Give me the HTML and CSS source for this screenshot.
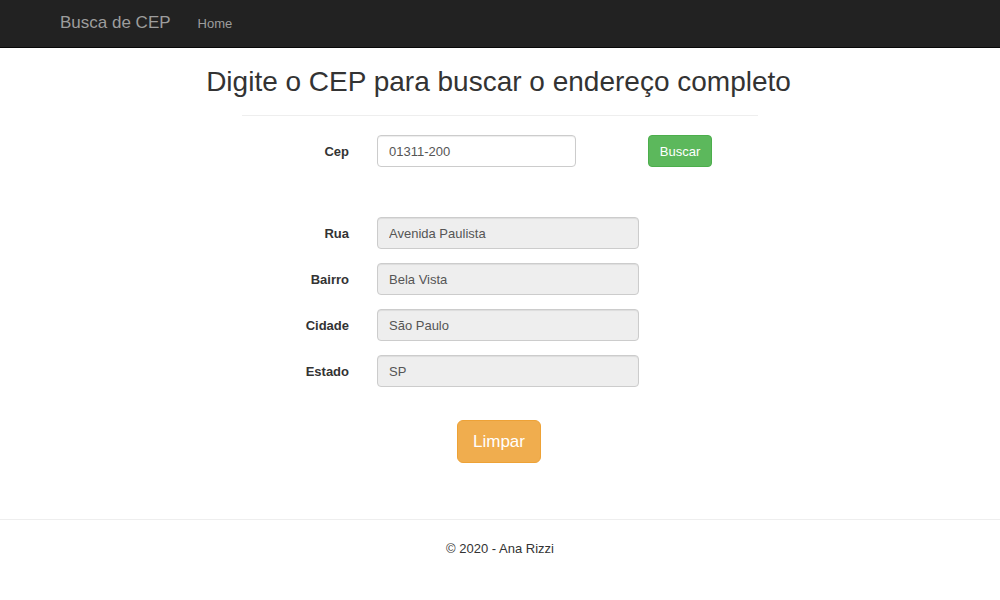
FILE: index.html
```html
<!DOCTYPE html>
<html lang="pt-BR">
<head>
<meta charset="utf-8">
<title>Busca de CEP</title>
<link rel="stylesheet" href="styles.css">
</head>
<body>
<nav class="navbar">
  <a class="brand" href="#">Busca de CEP</a>
  <a class="nav-link" href="#">Home</a>
</nav>
<main class="content">
  <h2 class="title">Digite o CEP para buscar o endereço completo</h2>
  <hr class="divider">
  <form class="form">
    <div class="row row-cep">
      <label class="label" for="cep">Cep</label>
      <input class="input input-cep" id="cep" type="text" value="01311-200">
      <button class="btn btn-success" type="button">Buscar</button>
    </div>
    <div class="address">
      <div class="row">
        <label class="label">Rua</label>
        <input class="input input-addr" type="text" value="Avenida Paulista" disabled>
      </div>
      <div class="row">
        <label class="label">Bairro</label>
        <input class="input input-addr" type="text" value="Bela Vista" disabled>
      </div>
      <div class="row">
        <label class="label">Cidade</label>
        <input class="input input-addr" type="text" value="São Paulo" disabled>
      </div>
      <div class="row">
        <label class="label">Estado</label>
        <input class="input input-addr" type="text" value="SP" disabled>
      </div>
    </div>
    <div class="actions">
      <button class="btn btn-warning btn-lg" type="button">Limpar</button>
    </div>
  </form>
</main>
<footer class="footer">
  <p class="copy">© 2020 - Ana Rizzi</p>
</footer>
</body>
</html>
```
FILE: styles.css
```css
* { box-sizing: border-box; }
html, body { margin: 0; padding: 0; }
body {
  font-family: "Liberation Sans", Arial, sans-serif;
  font-size: 13px;
  color: #333;
  background: #fff;
}
.navbar {
  height: 48px;
  background: #222;
  border-bottom: 1px solid #080808;
  display: flex;
  align-items: center;
  padding-left: 60px;
}
.brand {
  color: #9d9d9d;
  font-size: 17px;
  text-decoration: none;
  margin-right: 27px;
  margin-top: -1px;
}
.nav-link {
  color: #9d9d9d;
  font-size: 13px;
  text-decoration: none;
  margin-top: -1px;
}
.content {
  width: 516px;
  margin: 0 auto;
}
.title {
  margin: 18px -60px 0 -63px;
  font-size: 28px;
  font-weight: 500;
  line-height: 32px;
  text-align: center;
  color: #333;
}
.divider {
  margin: 17px 0 19px;
  border: 0;
  border-top: 1px solid #eee;
}
.form { margin: 0; }
.row {
  display: grid;
  grid-template-columns: 107px auto auto;
  justify-content: start;
  align-items: center;
  column-gap: 28px;
}
.row-cep .btn { margin-left: 44px; }
.label {
  font-weight: bold;
  text-align: right;
  font-size: 13px;
}
.input {
  height: 32px;
  border: 1px solid #ccc;
  border-radius: 4px;
  padding: 0 11px;
  font-family: inherit;
  font-size: 13px;
  color: #555;
  background: #fff;
  box-shadow: inset 0 1px 1px rgba(0,0,0,.075);
}
.input-cep { width: 199px; }
.input-addr {
  width: 262px;
  background: #eee;
  color: #555;
  -webkit-text-fill-color: #555;
  opacity: 1;
}
.address {
  margin-top: 50px;
  display: flex;
  flex-direction: column;
  gap: 14px;
}
.btn {
  font-family: inherit;
  border-radius: 4px;
  border: 1px solid transparent;
  color: #fff;
  cursor: pointer;
}
.btn-success {
  background: #5cb85c;
  border-color: #4cae4c;
  height: 32px;
  width: 64px;
  font-size: 13px;
  padding: 0;
}
.btn-warning {
  background: #f0ad4e;
  border-color: #eea236;
}
.btn-lg {
  height: 43px;
  width: 84px;
  font-size: 17px;
  border-radius: 6px;
  padding: 0;
}
.actions {
  margin-top: 33px;
  display: flex;
  justify-content: center;
  padding-right: 2px;
}
.footer {
  margin-top: 56px;
  border-top: 1px solid #eee;
  text-align: center;
}
.copy {
  margin: 20px 0;
  font-size: 13px;
  line-height: 18px;
}
```
